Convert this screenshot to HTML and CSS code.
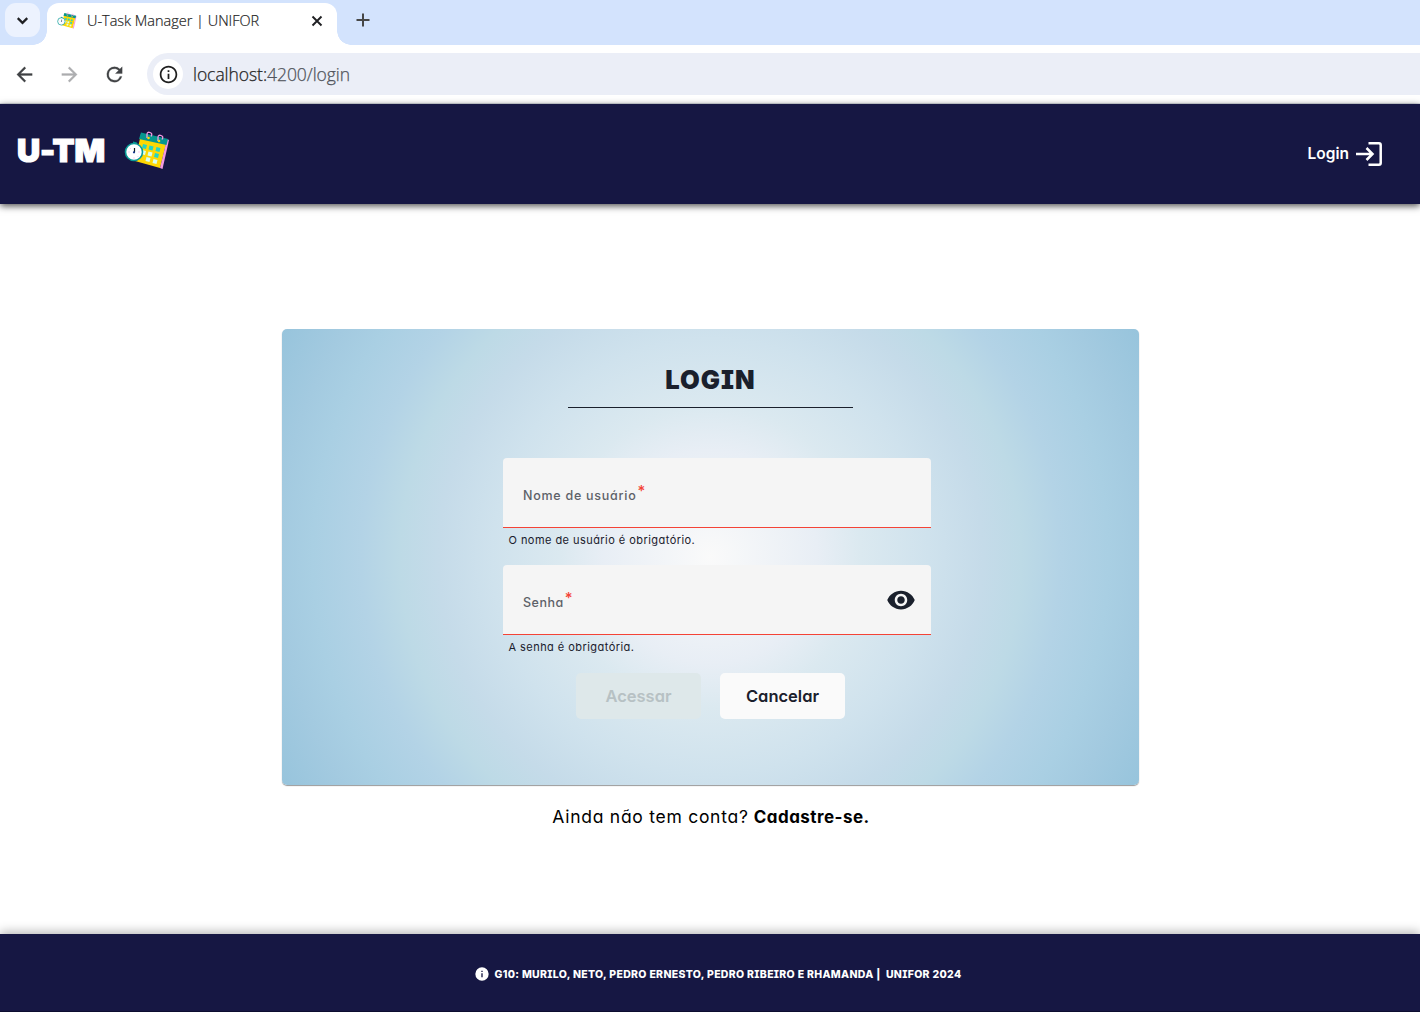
FILE: index.html
```html
<!DOCTYPE html>
<html lang="pt-BR">
<head>
<meta charset="utf-8">
<title>U-Task Manager | UNIFOR</title>
<link rel="stylesheet" href="styles.css">
</head>
<body>
<svg class="defs" aria-hidden="true">
  <symbol id="logo" viewBox="0 0 46 38">
    <path d="M17 3 L43 9 L36 37 L11 30Z" fill="#fdd703"/>
    <path d="M43 8 L45 9 L38.500 38 L36 37Z" fill="#f49ae0"/>
    <path d="M17 1.500 L44 8 L42.500 14 L15 8Z" fill="#07968f"/>
    <path d="M23 7V3.500q0-3 3-2t1 4M34 10V6.500q0-3 3-2t1 4" fill="none" stroke="#f59be1" stroke-width="1.300"/>
    <circle cx="24.500" cy="7" r="1.300" fill="#fdd703"/><circle cx="35" cy="10" r="1.300" fill="#fdd703"/>
    <g fill="#27d3c3"><path d="M19 13l4 1-1 4-4-1zM25.500 14.500l4 1-1 4-4-1zM32.500 16l4 1-1 4-4-1zM31 22l4 1-1 4-4-1z"/></g>
    <g fill="#d8fff0"><path d="M18 19l4 1-1 4-4-1zM24.500 20.500l4 1-1 4-4-1zM22.500 26l4 1-1 4-4-1zM29.500 28l4 1-1 4-4-1z"/></g>
    <path d="M9 10.500l4 1-1 3H9z" fill="#07968f"/>
    <circle cx="10" cy="21" r="8.500" fill="#fff" stroke="#0a9b98" stroke-width="1.600"/>
    <path d="M10.500 17v4" stroke="#122" stroke-width="1.200"/><circle cx="10" cy="21.300" r="1.100" fill="#138"/>
    <path d="M4.500 21h1M14.500 21h1M9.500 27h1M6 17l.5.5M13.500 25l.5.5" stroke="#f59be1"/>
  </symbol>
</svg>
<div class="tabs">
  <div class="tab-search"><svg viewBox="0 0 24 24"><path d="M6 9l6 6 6-6" fill="none" stroke="#1f2023" stroke-width="2.800"/></svg></div>
  <div class="tab">
    <svg class="favicon"><use href="#logo"/></svg>
    <span class="tab-title">U-Task Manager | UNIFOR</span>
    <svg class="close" viewBox="0 0 12 12"><path d="M1.500 1.500l9 9M10.500 1.500l-9 9" stroke="#1f2023" stroke-width="1.900"/></svg>
  </div>
  <svg class="plus" viewBox="0 0 14 14"><path d="M7 .5v13M.5 7h13" stroke="#474747" stroke-width="2"/></svg>
</div>
<div class="toolbar">
  <svg class="nav" viewBox="0 0 24 24"><path d="M20 11H7.830l5.590-5.590L12 4l-8 8 8 8 1.410-1.410L7.830 13H20z"/></svg>
  <svg class="nav off" viewBox="0 0 24 24"><path d="M4 11h12.170l-5.590-5.590L12 4l8 8-8 8-1.410-1.410L16.170 13H4z"/></svg>
  <svg class="nav" viewBox="0 0 24 24"><path d="M17.650 6.350A7.958 7.958 0 0 0 12 4a8 8 0 1 0 7.730 10h-2.080A6 6 0 1 1 12 6c1.660 0 3.140.69 4.220 1.780L13 11h7V4z"/></svg>
  <div class="address">
    <span class="site"><svg viewBox="0 0 24 24"><path d="M11 7h2v2h-2zm0 4h2v6h-2zm1-9C6.480 2 2 6.480 2 12s4.480 10 10 10 10-4.480 10-10S17.520 2 12 2zm0 18c-4.410 0-8-3.590-8-8s3.590-8 8-8 8 3.590 8 8-3.590 8-8 8z"/></svg></span>
    <span class="url">localhost:<span class="path">4200/login</span></span>
  </div>
</div>
<header class="header">
  <span class="brand">U-TM</span>
  <svg class="logo"><use href="#logo"/></svg>
  <a class="login-link"><span>Login</span><svg viewBox="0 0 26 24"><path d="M12.500 1.300H23q1.700 0 1.700 1.700v18q0 1.700-1.700 1.700H12.500M0 12h16.500M10.500 6l6 6-6 6" fill="none" stroke="#fff" stroke-width="2.500"/></svg></a>
</header>
<main class="main">
  <form class="card">
    <h1 class="title">LOGIN</h1>
    <div class="fields">
      <div class="field"><label class="user-label">Nome de usuário</label><span class="star">*</span></div>
      <p class="error">O nome de usuário é obrigatório.</p>
      <div class="field"><label class="pass-label">Senha</label><span class="star">*</span>
        <svg class="eye" viewBox="0 0 24 24"><path d="M12 4.500C7 4.500 2.730 7.610 1 12c1.730 4.390 6 7.500 11 7.500s9.270-3.110 11-7.500c-1.730-4.390-6-7.500-11-7.500zM12 17c-2.760 0-5-2.240-5-5s2.240-5 5-5 5 2.240 5 5-2.240 5-5 5zm0-8c-1.660 0-3 1.340-3 3s1.340 3 3 3 3-1.340 3-3-1.340-3-3-3z"/></svg>
      </div>
      <p class="error">A senha é obrigatória.</p>
    </div>
    <div class="actions"><button class="btn disabled" type="button">Acessar</button><button class="btn" type="button">Cancelar</button></div>
  </form>
  <p class="signup"><span class="ask">Ainda não tem conta?</span> <b>Cadastre-se.</b></p>
</main>
<footer class="footer">
  <svg viewBox="0 0 24 24"><path d="M12 2a10 10 0 1 0 0 20 10 10 0 0 0 0-20zm1 15h-2v-6h2zm0-8h-2V7h2z"/></svg>
  <span>G10: MURILO, NETO, PEDRO ERNESTO, PEDRO RIBEIRO E RHAMANDA |&nbsp; UNIFOR 2024</span>
</footer>
</body>
</html>
```
FILE: styles.css
```css
* { box-sizing: border-box; }
body { margin: 0; height: 1012px; display: flex; flex-direction: column; background: #fff; overflow: hidden;
  font-family: Inter, "Liberation Sans", sans-serif; font-feature-settings: "cv11", "cv08"; white-space: nowrap; }
.defs { position: absolute; width: 0; height: 0; }
.tabs { height: 45px; flex: none; display: flex; background: #d3e3fd; padding: 3px 0 0 5px; }
.tab-search { width: 35px; height: 34px; border-radius: 11px; background: #ecf2fe; display: flex; align-items: center; justify-content: center; }
.tab-search svg { width: 19px; height: 19px; }
.tab { position: relative; width: 290px; height: 42px; margin-left: 7px; padding: 0 14px 7px 10px; border-radius: 12px 12px 0 0; background: #fff; display: flex; align-items: center; }
.tab::before, .tab::after { content: ""; position: absolute; bottom: 0; width: 14px; height: 14px; }
.tab::before { left: -14px; background: radial-gradient(circle at 0 0, transparent 13.5px, #fff 14px); }
.tab::after { right: -14px; background: radial-gradient(circle at 100% 0, transparent 13.5px, #fff 14px); }
.favicon { width: 20px; height: 17px; }
.tab-title { margin-left: 10px; font: 14.5px "Open Sans", sans-serif; font-weight: 300; color: #1f1f1f; letter-spacing: -.01px; -webkit-text-stroke: .2px #1f1f1f; }
.close { width: 12px; height: 12px; margin-left: auto; }
.plus { width: 14px; height: 14px; margin: 10px 0 0 18.5px; }
.toolbar { height: 59px; flex: none; display: flex; align-items: center; padding-left: 13px; border-bottom: 1px solid #dfe3e8; }
.nav { width: 23px; height: 23px; margin-right: 22px; fill: #404245; stroke: #404245; stroke-width: .3; }
.nav.off { fill: #adaeb0; stroke: #adaeb0; }
.address { flex: 1; height: 42px; margin-left: -1px; border-radius: 21px 0 0 21px; background: #ebeef7; display: flex; align-items: center; padding-left: 6px; }
.site { width: 30px; height: 30px; border-radius: 50%; background: #fff; display: flex; align-items: center; justify-content: center; }
.site svg { width: 21px; height: 21px; fill: #1f1f1f; }
.url { margin-left: 10px; font: 17.5px "Open Sans", sans-serif; font-weight: 300; color: #1f1f1f; letter-spacing: -.05px; -webkit-text-stroke: .25px; }
.path { color: #50545b; }
.header { position: relative; height: 100px; flex: none; background: #161743; color: #fff; display: flex; align-items: center; padding: 0 38px 0 17px; box-shadow: 0 2px 7px rgba(0,0,0,.7); }
.brand { font-size: 32px; font-weight: 900; width: 88px; margin-top: -7px; letter-spacing: -.1px; -webkit-text-stroke: 1.2px #fff; }
.logo { width: 46px; height: 38px; margin: -8px 0 0 19px; }
.login-link { margin-left: auto; display: flex; align-items: center; font-size: 15.5px; font-weight: 600; }
.login-link span { margin-top: -1px; }
.login-link svg { width: 26px; height: 24px; margin-left: 7px; }
.main { height: 730px; flex: none; display: flex; flex-direction: column; align-items: center; padding-top: 125px; }
.card { width: 857px; height: 456px; margin: 0 0 1px 1px; border-radius: 5px; display: flex; flex-direction: column; align-items: center; color: #1a202c;
  background: radial-gradient(circle, #fafafa 0%, #e8eef5 22%, #dbe9f0 31%, #cfe2ed 45%, #c5dbe9 56%, #bddae6 64%, #b3d3e6 72%, #a9cfe3 82%, #a3cae0 89%, #97c4dc 100%); box-shadow: 0 1px 1px rgba(0,0,0,.4); }
.title { width: 285px; height: 79px; margin: 0; padding-top: 32px; border-bottom: 1px solid #1a202c; text-align: center; font-size: 25.5px; line-height: 38px; font-weight: 900; letter-spacing: 1px; }
.fields { width: 428px; margin: 50px 0 0 13px; }
.field { height: 70px; padding: 5px 14px 0 20px; border-radius: 4px 4px 0 0; background: #f5f5f5; border-bottom: 1px solid #f44336; display: flex; align-items: center; font-size: 12.5px; font-weight: 500; color: #5d6168; }
.user-label { letter-spacing: .74px; }
.pass-label { letter-spacing: .5px; }
.star { color: #f44336; font-size: 15px; margin: -10px 0 0 1px; }
.eye { width: 30px; height: 30px; margin: -5px 1px 0 auto; fill: #1a202c; }
.error { margin: 0 0 12px 5.5px; height: 25px; line-height: 25px; font-size: 11px; letter-spacing: .45px; }
.actions { display: flex; gap: 19px; margin-top: 1px; }
.btn { width: 125px; height: 46px; padding: 0; border: 0; border-radius: 5px; background: #fafafa; color: #1a202c; font: inherit; font-size: 16.5px; font-weight: 600; }
.disabled { background: #dee8ea; color: #b7c1c4; }
.signup { margin: 20px 0 0 2px; line-height: 22px; font-size: 17px; color: #000; letter-spacing: .45px; }
.ask { font-size: 17.5px; letter-spacing: .73px; }
.footer { position: relative; flex: 1; display: flex; justify-content: center; align-items: center; padding: 3px 0 0 15px; background: #161743; color: #fff; font-size: 10.5px; font-weight: 850; letter-spacing: .32px; box-shadow: 0 -2px 10px rgba(0,0,0,.3); border-bottom: 1px solid #0c0d30; }
.footer svg { width: 16px; height: 16px; fill: #fff; margin-right: 5px; }
```
